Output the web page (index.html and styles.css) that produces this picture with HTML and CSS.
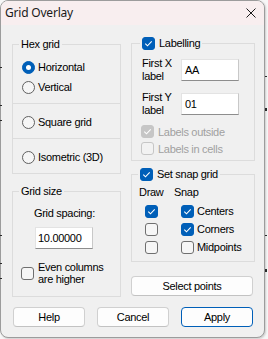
FILE: index.html
```html
<!DOCTYPE html>
<html>
<head>
<meta charset="utf-8">
<link rel="stylesheet" href="styles.css">
</head>
<body>
<div class="win">
  <div class="titlebar">
    <span class="title-text">Grid Overlay</span>
    <svg class="close" width="10" height="10" viewBox="0 0 10 10"><path d="M0.5 0.5 L9.5 9.5 M9.5 0.5 L0.5 9.5" stroke="#1a1a1a" stroke-width="1" fill="none"/></svg>
  </div>
  <div class="content">
    <div class="cols">
      <div class="col col-left">
        <fieldset class="grp hex">
          <legend class="lg-text">Hex grid</legend>
          <div class="opt"><span class="rb on"></span>Horizontal</div>
          <div class="opt"><span class="rb"></span>Vertical</div>
        </fieldset>
        <div class="box"><div class="opt"><span class="rb"></span>Square grid</div></div>
        <div class="box"><div class="opt"><span class="rb"></span>Isometric (3D)</div></div>
        <fieldset class="grp size">
          <legend class="lg-text">Grid size</legend>
          <div class="spacing-label">Grid spacing:</div>
          <div class="edit spacing-edit">10.00000</div>
          <div class="opt multi"><span class="cb"></span><span class="multi-text">Even columns<br>are higher</span></div>
        </fieldset>
      </div>
      <div class="col col-right">
        <fieldset class="grp labelling">
          <legend class="lg-check lg-labelling"><span class="cb on"><svg width="13" height="13" viewBox="0 0 13 13"><path d="M3.3 6.6 L5.5 8.8 L9.7 4.4" stroke="#fff" stroke-width="1.1" fill="none"/></svg></span>Labelling</legend>
          <div class="field-row">
            <span class="flabel">First X<br>label</span>
            <span class="edit label-edit">AA</span>
          </div>
          <div class="field-row second">
            <span class="flabel">First Y<br>label</span>
            <span class="edit label-edit">01</span>
          </div>
          <div class="check-row dis first"><span class="cb on dis"><svg width="13" height="13" viewBox="0 0 13 13"><path d="M3.3 6.6 L5.5 8.8 L9.7 4.4" stroke="#fff" stroke-width="1.1" fill="none"/></svg></span>Labels outside</div>
          <div class="check-row dis"><span class="cb dis"></span>Labels in cells</div>
        </fieldset>
        <fieldset class="grp snap">
          <legend class="lg-check lg-snap"><span class="cb on"><svg width="13" height="13" viewBox="0 0 13 13"><path d="M3.3 6.6 L5.5 8.8 L9.7 4.4" stroke="#fff" stroke-width="1.1" fill="none"/></svg></span>Set snap grid</legend>
          <div class="snap-grid">
            <span class="hdr">Draw</span><span class="hdr">Snap</span>
            <span class="draw-cell"><span class="cb on"><svg width="13" height="13" viewBox="0 0 13 13"><path d="M3.3 6.6 L5.5 8.8 L9.7 4.4" stroke="#fff" stroke-width="1.1" fill="none"/></svg></span></span>
            <span class="snap-cell"><span class="cb on"><svg width="13" height="13" viewBox="0 0 13 13"><path d="M3.3 6.6 L5.5 8.8 L9.7 4.4" stroke="#fff" stroke-width="1.1" fill="none"/></svg></span>Centers</span>
            <span class="draw-cell"><span class="cb"></span></span>
            <span class="snap-cell"><span class="cb on"><svg width="13" height="13" viewBox="0 0 13 13"><path d="M3.3 6.6 L5.5 8.8 L9.7 4.4" stroke="#fff" stroke-width="1.1" fill="none"/></svg></span>Corners</span>
            <span class="draw-cell"><span class="cb"></span></span>
            <span class="snap-cell"><span class="cb"></span>Midpoints</span>
          </div>
        </fieldset>
        <button class="btn select-btn">Select points</button>
      </div>
    </div>
    <div class="actions">
      <button class="btn act">Help</button>
      <button class="btn act">Cancel</button>
      <button class="btn act default">Apply</button>
    </div>
  </div>
</div>
<span class="tick tl1"></span>
<span class="tick tl2"></span>
<span class="tick tl3"></span>
<span class="tick tl4"></span>
<span class="tick tl5"></span>
<span class="tick tl6"></span>
<span class="tick tr1"></span>
<span class="tick tr2"></span>
<span class="tick big tr3"></span>
<span class="tick big tr4"></span>
</body>
</html>
```

FILE: styles.css
```css
html, body {
  margin: 0;
  padding: 0;
  background: #f7f7f7;
}
body {
  position: relative;
  width: 268px;
  height: 339px;
  overflow: hidden;
  font-family: "Liberation Sans", Arial, sans-serif;
  font-size: 11px;
  letter-spacing: -0.3px;
  color: #000;
}
.win {
  width: 265px;
  height: 338px;
  box-sizing: border-box;
  border: 1px solid #9c9c9c;
  border-radius: 8px;
  background: #f0f0f0;
  overflow: hidden;
  box-shadow: 1px 1px 2px rgba(0,0,0,0.18);
}

/* background content peeking around the dialog edge */
.tick {
  position: absolute;
  width: 2px;
  height: 1px;
  background: #2a2a2a;
}
.tick.big { height: 3px; }
.tl1 { left: 0; top: 67px; }
.tl2 { left: 0; top: 105px; }
.tl3 { left: 0; top: 120px; }
.tl4 { left: 0; top: 235px; }
.tl5 { left: 0; top: 263px; }
.tl6 { left: 0; top: 278px; }
.tr1 { left: 265px; top: 76px; }
.tr2 { left: 265px; top: 235px; }
.tr3 { left: 265px; top: 108px; }
.tr4 { left: 265px; top: 269px; }

.titlebar {
  height: 24px;
  background: #f8eeef;
  display: flex;
  align-items: center;
  justify-content: space-between;
  padding-left: 4px;
}
.title-text {
  font-family: "Noto Sans", "Open Sans", sans-serif;
  font-size: 12px;
  letter-spacing: -0.2px;
  line-height: 24px;
  color: #1a1a1a;
}
.close {
  margin-right: 8px;
  display: block;
}
.content {
  padding: 12px 0 0 11px;
}
.cols {
  display: flex;
  gap: 10px;
}
.col {
  display: flex;
  flex-direction: column;
}
.col-left { width: 109px; }
.col-right { width: 124px; }

.grp {
  margin: 0;
  padding: 0;
  border: 1px solid #dcdcdc;
  min-width: 0;
}
.grp legend {
  line-height: 13px;
  height: 13px;
  padding: 0 2px;
}
.lg-text { margin-left: 6px; }
.lg-check {
  display: flex;
  align-items: center;
  gap: 4px;
}
.lg-labelling { margin-left: 8px; }
.lg-snap { margin-left: 6px; }

.opt {
  display: flex;
  align-items: center;
  gap: 3px;
  height: 20px;
  padding-left: 9px;
  line-height: 13px;
}
.hex {
  margin-top: 1px;
  padding: 6px 0 6px 0;
}
.box {
  margin-top: -1px;
  border: 1px solid #dcdcdc;
  padding: 8px 0 6px 0;
}
.size {
  margin-top: 11px;
  padding: 0 0 11px 0;
}
.spacing-label {
  margin: 9px 0 0 21px;
  line-height: 13px;
}
.edit {
  display: block;
  box-sizing: border-box;
  background: #fff;
  border: 1px solid #e3e3e3;
  border-right-color: #c8c8c8;
  border-bottom-color: #8d8d8d;
  height: 22px;
  line-height: 20px;
  padding-left: 2px;
  font-size: 11px;
}
.spacing-edit {
  margin: 7px 0 0 22px;
  width: 58px;
}
.opt.multi {
  height: auto;
  margin-top: 12px;
  padding-left: 8px;
  gap: 4px;
  line-height: 12px;
}

.rb {
  width: 13px;
  height: 13px;
  box-sizing: border-box;
  border-radius: 50%;
  border: 1px solid #606060;
  background: #f6f6f6;
  flex: none;
  position: relative;
}
.rb.on {
  background: #005fb8;
  border-color: #005fb8;
}
.rb.on::after {
  content: "";
  position: absolute;
  left: 3px;
  top: 3px;
  width: 5px;
  height: 5px;
  border-radius: 50%;
  background: #fff;
}
.cb {
  width: 13px;
  height: 13px;
  box-sizing: border-box;
  border-radius: 3px;
  border: 1px solid #6f6f6f;
  background: #f6f6f6;
  flex: none;
  display: block;
  position: relative;
}
.cb svg {
  position: absolute;
  left: -1px;
  top: -1px;
}
.cb.on {
  background: #005fb8;
  border-color: #005fb8;
}
.cb.dis {
  border-color: #c6c6c6;
  background: #f2f2f2;
}
.cb.on.dis {
  background: #c6c6c6;
  border-color: #c6c6c6;
}

.labelling {
  padding: 7px 0 3px 0;
}
.field-row {
  display: flex;
  align-items: flex-start;
  padding-left: 10px;
}
.field-row.second { margin-top: 8px; }
.flabel {
  width: 39px;
  line-height: 13px;
}
.label-edit {
  width: 58px;
  margin-top: 2px;
  padding-left: 3px;
}
.check-row {
  display: flex;
  align-items: center;
  gap: 4px;
  height: 17px;
  padding-left: 9px;
}
.check-row.first { margin-top: 6px; }
.dis { color: #a0a0a0; }

.snap {
  margin-top: 7px;
  padding: 5px 0 5px 0;
}
.snap-grid {
  display: grid;
  grid-template-columns: 35px 1fr;
  grid-template-rows: 16px;
  grid-auto-rows: 18px;
  padding-left: 7px;
}
.snap-grid .hdr {
  line-height: 13px;
  height: 13px;
  align-self: start;
}
.draw-cell {
  display: flex;
  align-items: center;
  padding-left: 6px;
}
.snap-cell {
  display: flex;
  align-items: center;
  gap: 3px;
  padding-left: 7px;
}

.btn {
  font-family: "Liberation Sans", Arial, sans-serif;
  font-size: 11px;
  letter-spacing: -0.3px;
  color: #000;
  background: #fdfdfd;
  border: 1px solid #d0d0d0;
  border-bottom-color: #c2c2c2;
  border-radius: 4px;
  padding: 0;
  margin: 0;
  box-sizing: border-box;
}
.select-btn {
  margin-top: 14px;
  height: 20px;
  width: 122px;
}
.actions {
  display: flex;
  gap: 12px;
  margin-top: 10px;
  padding-left: 1px;
}
.act {
  width: 72px;
  height: 20px;
}
.act.default {
  border: 1px solid #005fb8;
}
```
